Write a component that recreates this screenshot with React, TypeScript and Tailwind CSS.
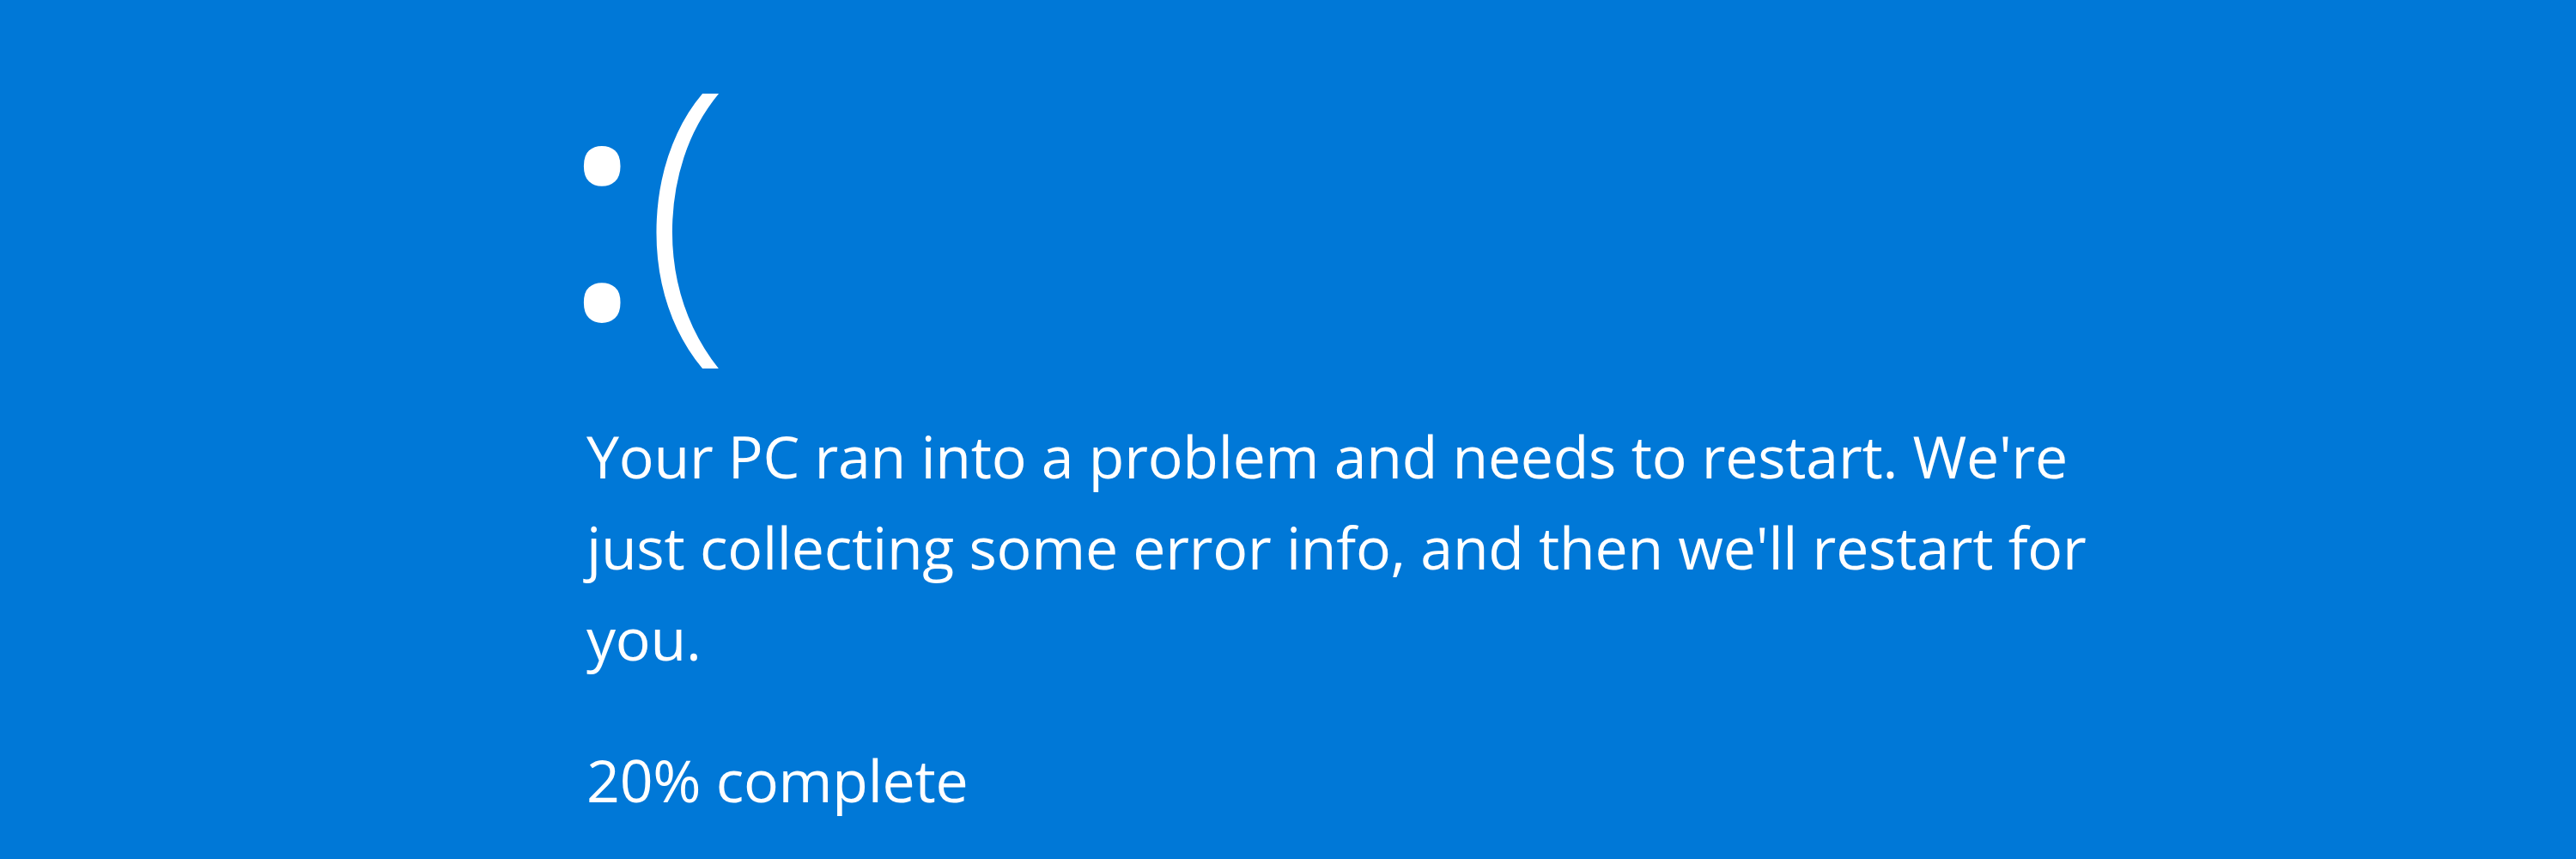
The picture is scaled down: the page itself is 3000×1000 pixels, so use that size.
import React from "react";

export default function App() {
  return (
    <div className="min-h-screen w-full bg-[#0078d7] text-white font-['Open_Sans',sans-serif] antialiased">
      <div className="pl-[683px]">
        {/* the big sad face */}
        <div className="text-[367px] leading-[1.25] whitespace-nowrap">
          <span className="ml-[-30px] font-medium">:</span>
          <span className="ml-0 font-light">(</span>
        </div>
        <p className="mt-[19px] max-w-[1790px] text-[68px] leading-[106px] tracking-[-0.25px]">
          Your PC ran into a problem and needs to restart. We're just
          collecting some error info, and then we'll restart for you.
        </p>
        <p className="mt-[59px] text-[68px] leading-[106px] tracking-[-0.25px]">
          20% complete
        </p>
      </div>
    </div>
  );
}
